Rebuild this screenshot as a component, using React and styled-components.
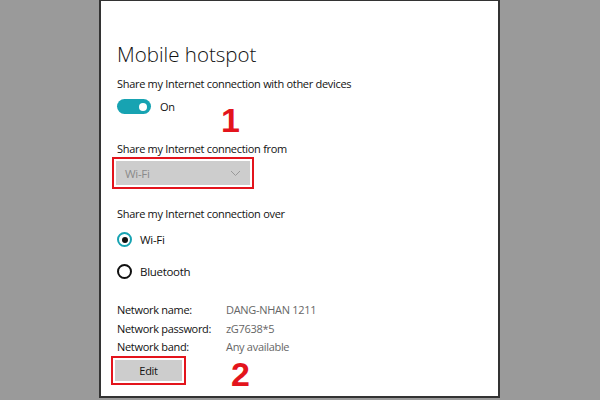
import React from 'react'
import styled, { createGlobalStyle } from 'styled-components'

const Global = createGlobalStyle`
  html, body { margin: 0; padding: 0; }
  body {
    width: 600px;
    height: 400px;
    background: #9a9a9a;
    font-family: "Open Sans", "Noto Sans", sans-serif;
    overflow: hidden;
  }
`

const Page = styled.div`
  width: 600px;
  height: 400px;
  display: flex;
  justify-content: center;
  align-items: flex-start;
`

const Panel = styled.div`
  box-sizing: border-box;
  width: 401px;
  height: 398px;
  margin-left: -1px;
  background: #fff;
  border: 2px solid #333;
  border-top-width: 1px;
  padding: 38px 0 0 16px;
  color: #111;
  position: relative;
  letter-spacing: -0.3px;
`

const Title = styled.h1`
  margin: 0;
  font-weight: 300;
  font-size: 20.5px;
  line-height: 30px;
  letter-spacing: 0;
`

const Label = styled.div`
  font-size: 11px;
  line-height: 16px;
  margin-top: ${p => p.top || 0}px;
`

const ToggleRow = styled.div`
  display: flex;
  align-items: center;
  gap: 9px;
  margin-top: 7px;
  font-size: 11px;
`

const Toggle = styled.div`
  width: 34px;
  height: 15px;
  border-radius: 8px;
  background: #17a3b2;
  position: relative;
  &::after {
    content: '';
    position: absolute;
    right: 4px;
    top: 3.5px;
    width: 8px;
    height: 8px;
    border-radius: 50%;
    background: #fff;
  }
`

const Marker = styled.div`
  display: inline-block;
  border: 2.5px solid #e3141c;
  padding: 2px;
  margin-left: ${p => p.left || -3}px;
`

const Select = styled.div`
  width: 134px;
  height: 24px;
  background: #cdcdcd;
  display: flex;
  align-items: center;
  justify-content: space-between;
  padding: 0 9px;
  box-sizing: border-box;
  color: #8a8a8a;
  font-size: 11.5px;
`

const Number = styled.span`
  position: absolute;
  left: ${p => p.x}px;
  top: ${p => p.y}px;
  color: #e3141c;
  font-family: "Liberation Sans", Arial, sans-serif;
  font-weight: bold;
  font-size: 34px;
  line-height: 26px;
  letter-spacing: 0;
`

const RadioRow = styled.div`
  display: flex;
  align-items: center;
  gap: 8px;
  margin-top: ${p => p.top}px;
  font-size: 11.5px;
`

const Radio = styled.span`
  box-sizing: border-box;
  width: 15px;
  height: 15px;
  border-radius: 50%;
  border: 2px solid ${p => (p.checked ? '#17a3b2' : '#111')};
  display: flex;
  align-items: center;
  justify-content: center;
  &::after {
    content: '';
    width: 6px;
    height: 6px;
    border-radius: 50%;
    background: ${p => (p.checked ? '#111' : 'transparent')};
  }
`

const Info = styled.div`
  display: grid;
  grid-template-columns: 109px auto;
  row-gap: 2px;
  margin-top: 23px;
  font-size: 11px;
  line-height: 16.5px;
`

const Value = styled.span`
  color: #666;
`

const Button = styled.div`
  width: 67px;
  height: 21px;
  background: #cdcdcd;
  display: flex;
  align-items: center;
  justify-content: center;
  font-size: 11px;
  color: #111;
`

export default function App() {
  return (
    <Page>
      <Global />
      <Panel>
        <Title>Mobile hotspot</Title>
        <Label top={7}>Share my Internet connection with other devices</Label>
        <ToggleRow>
          <Toggle />
          <span>On</span>
        </ToggleRow>
        <Number x={120} y={106}>1</Number>
        <Label top={27}>Share my Internet connection from</Label>
        <Marker left={-5}>
          <Select>
            <span>Wi-Fi</span>
            <svg width="11" height="7" viewBox="0 0 11 7">
              <path d="M1 1l4.5 4.5L10 1" fill="none" stroke="#999" strokeWidth="1" />
            </svg>
          </Select>
        </Marker>
        <Label top={17}>Share my Internet connection over</Label>
        <RadioRow top={10}>
          <Radio checked />
          <span>Wi-Fi</span>
        </RadioRow>
        <RadioRow top={17}>
          <Radio />
          <span>Bluetooth</span>
        </RadioRow>
        <Info>
          <span>Network name:</span>
          <Value>DANG-NHAN 1211</Value>
          <span>Network password:</span>
          <Value>zG7638*5</Value>
          <span>Network band:</span>
          <Value>Any available</Value>
        </Info>
        <Marker left={-6}>
          <Button>Edit</Button>
        </Marker>
        <Number x={130} y={360}>2</Number>
      </Panel>
    </Page>
  )
}
